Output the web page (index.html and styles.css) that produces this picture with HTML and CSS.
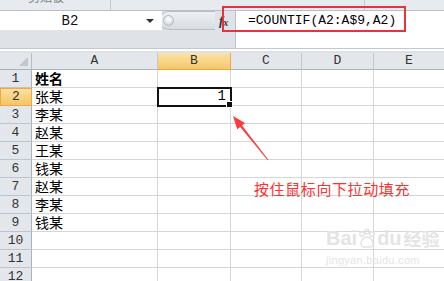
FILE: index.html
```html
<!DOCTYPE html>
<html lang="zh">
<head>
    <meta charset="UTF-8">
    <title>COUNTIF 填充</title>
    <link rel="stylesheet" href="styles.css">
</head>
<body>
    <div class="ribbon">
        <div class="ribbon-group first"><span class="ribbon-label">剪贴板</span></div>
        <div class="ribbon-group second"></div>
    </div>

    <div class="formula-bar">
        <div class="formula-left">
            <div class="name-row">
                <div class="name-box">
                    <span class="name-text">B2</span>
                    <span class="drop-arrow"></span>
                </div>
                <div class="slider"><span class="knob"></span></div>
                <div class="fx"><i>f</i><i class="x">x</i></div>
            </div>
        </div>
        <div class="formula-input">=COUNTIF(A2:A$9,A2)</div>
        <div class="formula-mark"></div>
    </div>

    <div class="split"></div>

    <div class="sheet">
        <div class="corner"></div>
        <div class="col-head">A</div>
        <div class="col-head active">B</div>
        <div class="col-head">C</div>
        <div class="col-head">D</div>
        <div class="col-head last">E</div>

        <div class="row-head">1</div>
        <div class="cell bold">姓名</div><div class="cell"></div><div class="cell"></div><div class="cell"></div><div class="cell last"></div>

        <div class="row-head active">2</div>
        <div class="cell">张某</div><div class="cell num selected">1<span class="handle"></span></div><div class="cell"></div><div class="cell"></div><div class="cell last"></div>

        <div class="row-head">3</div>
        <div class="cell">李某</div><div class="cell"></div><div class="cell"></div><div class="cell"></div><div class="cell last"></div>

        <div class="row-head">4</div>
        <div class="cell">赵某</div><div class="cell"></div><div class="cell"></div><div class="cell"></div><div class="cell last"></div>

        <div class="row-head">5</div>
        <div class="cell">王某</div><div class="cell"></div><div class="cell"></div><div class="cell"></div><div class="cell last"></div>

        <div class="row-head">6</div>
        <div class="cell">钱某</div><div class="cell"></div><div class="cell"></div><div class="cell"></div><div class="cell last"></div>

        <div class="row-head">7</div>
        <div class="cell">赵某</div><div class="cell"></div><div class="cell"></div><div class="cell"></div><div class="cell last"></div>

        <div class="row-head">8</div>
        <div class="cell">李某</div><div class="cell"></div><div class="cell"></div><div class="cell"></div><div class="cell last"></div>

        <div class="row-head">9</div>
        <div class="cell">钱某</div><div class="cell"></div><div class="cell"></div><div class="cell"></div><div class="cell last"></div>

        <div class="row-head">10</div>
        <div class="cell"></div><div class="cell"></div><div class="cell"></div><div class="cell"></div><div class="cell last"></div>

        <div class="row-head">11</div>
        <div class="cell"></div><div class="cell"></div><div class="cell"></div><div class="cell"></div><div class="cell last"></div>

        <div class="row-head">12</div>
        <div class="cell"></div><div class="cell"></div><div class="cell"></div><div class="cell"></div><div class="cell last"></div>
    </div>

    <!-- annotation over the sheet -->
    <svg class="arrow" width="444" height="281" viewBox="0 0 444 281">
        <polygon points="233,116 245,123.1 242.1,125.4 268.4,159.7 267.6,160.3 240.2,127.1 237.2,129.3" fill="#ff3c3c"/>
    </svg>
    <div class="note">按住鼠标向下拉动填充</div>

    <div class="watermark">
        <div class="wm-logo">Bai<svg width="20" height="20" viewBox="0 0 20 20"><g fill="none" stroke="#e2e2e2" stroke-width="1.4"><circle cx="5" cy="6" r="2.2"/><circle cx="10" cy="3.5" r="2.2"/><circle cx="15" cy="6" r="2.2"/><path d="M4 16c0-4 3-7 6-7s6 3 6 7c0 2-2 3-3 3h-6c-1 0-3-1-3-3z"/></g></svg>du<span class="wm-cn">经验</span></div>
        <div class="wm-url">jingyan.baidu.com</div>
    </div>
</body>
</html>
```

FILE: styles.css
```css
/* General */
* {
    margin: 0;
    padding: 0;
    box-sizing: border-box;
}

body {
    width: 444px;
    height: 281px;
    overflow: hidden;
    position: relative;
    background-color: #ffffff;
    font-family: "Liberation Mono", monospace;
    color: #333;
}

/* Ribbon strip */
.ribbon {
    height: 11px;
    display: flex;
    background-color: #e7eaee;
    border-bottom: 1px solid #b9bfc8;
    overflow: hidden;
}

.ribbon-group {
    border-right: 1px solid #c4cad2;
}

.ribbon-group.first {
    width: 111px;
    padding-left: 28px;
}

.ribbon-group.second {
    width: 254px;
}

.ribbon-label {
    display: block;
    margin-top: -10px;
    font-family: "Noto Sans CJK SC", sans-serif;
    font-size: 12px;
    line-height: 14px;
    color: #7a8088;
}

/* Formula bar */
.formula-bar {
    height: 37px;
    display: flex;
    position: relative;
    background-color: #dfe3e8;
}

.formula-left {
    width: 235px;
    display: flex;
    flex-direction: column;
}

.name-row {
    height: 19px;
    display: flex;
    align-items: center;
}

.name-box {
    width: 162px;
    height: 19px;
    background-color: #fff;
    display: flex;
    align-items: center;
    position: relative;
}

.name-text {
    width: 140px;
    text-align: center;
    font-size: 14px;
    color: #111;
}

.drop-arrow {
    width: 0;
    height: 0;
    border-left: 4px solid transparent;
    border-right: 4px solid transparent;
    border-top: 4px solid #333;
    margin-left: 6px;
    margin-top: 1px;
}

.slider {
    width: 56px;
    height: 19px;
    margin-left: -3px;
    background: linear-gradient(#eef0f3, #d8dce2);
    border: 1px solid #b8bec7;
    border-right: none;
    border-radius: 10px 0 0 10px;
    display: flex;
    align-items: center;
    padding-left: 3px;
}

.knob {
    width: 11px;
    height: 11px;
    border-radius: 50%;
    background: radial-gradient(circle at 50% 35%, #ffffff, #c9ced6);
    border: 1px solid #b3b9c2;
}

.fx {
    width: 17px;
    height: 19px;
    display: flex;
    align-items: center;
    padding-left: 4px;
    font-family: "Liberation Serif", serif;
    font-weight: bold;
    font-size: 13px;
    color: #333;
}

.fx .x {
    font-size: 10px;
    margin-top: 3px;
}

.formula-input {
    flex: 1;
    background-color: #fff;
    border-left: 1px solid #b9bfc8;
    padding: 2px 0 0 12px;
    font-size: 13px;
    line-height: 16px;
    color: #000;
}

.formula-mark {
    position: absolute;
    left: 222px;
    top: -5px;
    width: 184px;
    height: 26px;
    border: 2px solid #e8323c;
}

.split {
    height: 5px;
    background-color: #fff;
    border-top: 1px solid #c2c8d0;
    border-bottom: 2px solid #dde1e6;
}

/* Sheet grid */
.sheet {
    display: grid;
    grid-template-columns: 32px 126px 73px 71px 72px 1fr;
    grid-template-rows: 17px;
    grid-auto-rows: 18px;
}

.corner {
    background-color: #e3e7ec;
    border-right: 1px solid #b4bcc6;
    border-bottom: 1px solid #a9b3bf;
    position: relative;
}

.corner::after {
    content: "";
    position: absolute;
    right: 3px;
    bottom: 3px;
    border-left: 9px solid transparent;
    border-bottom: 9px solid #c0c6ce;
}

.col-head {
    background-color: #e3e7ec;
    border-right: 1px solid #c0c8d2;
    border-bottom: 1px solid #a9b3bf;
    text-align: center;
    font-size: 13px;
    line-height: 16px;
    color: #333;
}

.col-head.active {
    background: linear-gradient(#fbe3a9, #f4c767);
    border-right-color: #f0a940;
    border-bottom: 1px solid #f0a940;
}

.col-head.last {
    border-right: none;
}

.row-head {
    background-color: #e3e7ec;
    border-right: 1px solid #a9b3bf;
    border-bottom: 1px solid #bcc5cf;
    text-align: center;
    font-size: 13px;
    line-height: 17px;
    color: #333;
}

.row-head.active {
    background: linear-gradient(#fbe1a3, #f3c663);
    border: 1px solid #f0a940;
    line-height: 16px;
}

.cell {
    border-right: 1px solid #d6d6d6;
    border-bottom: 1px solid #d6d6d6;
    padding-left: 3px;
    font-family: "Noto Sans CJK SC", sans-serif;
    font-size: 14px;
    line-height: 17px;
    color: #000;
}

.cell.last {
    border-right: none;
}

.cell.bold {
    font-weight: bold;
}

.cell.num {
    font-family: "Liberation Mono", monospace;
    font-size: 14px;
    text-align: right;
    padding-right: 4px;
}

.cell.selected {
    position: relative;
    outline: 2px solid #111;
    outline-offset: -1px;
}

.handle {
    position: absolute;
    right: -3px;
    bottom: -3px;
    width: 5px;
    height: 5px;
    background-color: #111;
    border: 1px solid #fff;
    box-sizing: content-box;
}

/* Annotation */
.arrow {
    position: absolute;
    left: 0;
    top: 0;
}

.note {
    position: absolute;
    left: 254px;
    top: 181px;
    font-family: "Noto Sans CJK SC", sans-serif;
    font-size: 15px;
    line-height: 16px;
    letter-spacing: 0.6px;
    color: #ff3030;
}

.watermark {
    position: absolute;
    left: 326px;
    top: 226px;
    color: #e4e4e4;
    font-family: "Liberation Sans", sans-serif;
}

.wm-logo {
    display: flex;
    align-items: center;
    font-size: 20px;
    font-weight: bold;
    line-height: 24px;
}

.wm-cn {
    font-family: "Noto Sans CJK SC", sans-serif;
    font-size: 18px;
    margin-left: 2px;
}

.wm-url {
    font-size: 11px;
    margin-top: 4px;
    letter-spacing: 0.3px;
}
```
